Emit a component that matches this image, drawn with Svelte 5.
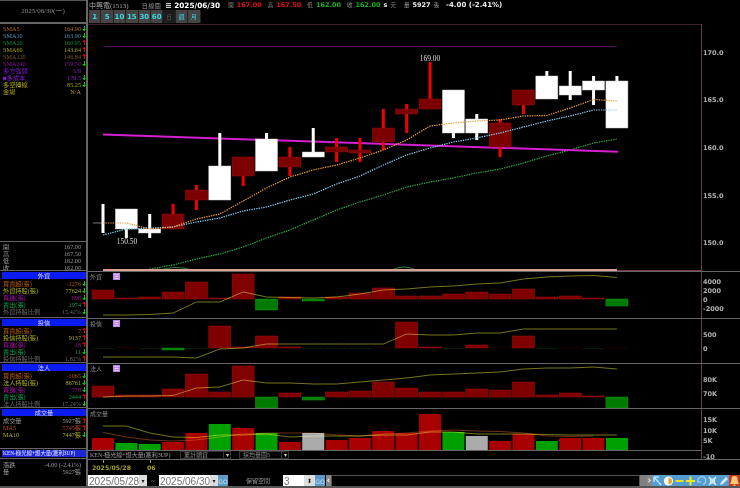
<script>
  // x position of each trading day on the page
  const xs = Array.from({ length: 23 }, (_, i) => 103 + i * 23.36);
  const pts = (ys, from = 0) => ys.map((y, i) => `${xs[i + from]},${y}`).join(' ');

  const indicators = [
    { name: 'SMA5', val: '164.90', dir: 'd', c: '#b86a28' },
    { name: 'SMA10', val: '163.90', dir: 'd', c: '#4f93b5' },
    { name: 'SMA20', val: '160.95', dir: 'u', c: '#0c8a45' },
    { name: 'SMA60', val: '143.64', dir: 'u', c: '#a8a410' },
    { name: 'SMA120', val: '146.84', dir: 'u', c: '#80562a' },
    { name: 'SMA240', val: '159.50', dir: 'd', c: '#8a109a' },
    { name: '多方強弱', val: '5/9', dir: '', c: '#7a18c8' },
    { name: '■多成本', val: '170.5', dir: 'd', c: '#8a20d0' },
    { name: '多空轉線', val: '85.25', dir: 'd', c: '#a8a410' },
    { name: '金場', val: 'N/A', dir: '', c: '#a8a410' },
  ];

  const ohlc = [
    ['開', '167.00'],
    ['高', '167.50'],
    ['低', '162.00'],
    ['收', '162.00'],
  ];

  const boxes = [
    {
      title: '外資',
      h: 47,
      rows: [
        ['買賣超(張)', '-1276', 'd', 'buy'],
        ['外資持股(張)', '77624', 'd', 'hold'],
        ['買進(張)', '698', 'd', 'in'],
        ['賣出(張)', '1974', 'u', 'out'],
        ['外資持股比例', '15.42%', 'd', 'pct'],
      ],
    },
    {
      title: '投信',
      h: 45,
      rows: [
        ['買賣超(張)', '7', 'u', 'buy'],
        ['投信持股(張)', '9137', 'u', 'hold'],
        ['買進(張)', '18', 'u', 'in'],
        ['賣出(張)', '11', 'd', 'out'],
        ['投信持股比例', '1.82%', 'u', 'pct'],
      ],
    },
    {
      title: '法人',
      h: 45,
      rows: [
        ['買賣超(張)', '-1065', 'd', 'buy'],
        ['法人持股(張)', '86761', 'd', 'hold'],
        ['買進(張)', '778', 'd', 'in'],
        ['賣出(張)', '2444', 'u', 'out'],
        ['法人持股比例', '17.24%', 'd', 'pct'],
      ],
    },
    {
      title: '成交量',
      h: 41,
      rows: [
        ['成交量', '5927張', 'u', 'volrow'],
        ['MA5', '5745張', 'u', 'ma5'],
        ['MA10', '7447張', 'd', 'hold'],
      ],
    },
  ];

  const periods = ['1', '5', '10', '15', '30', '60'];

  // candles: top of wick, top of body, bottom of body, bottom of wick (page y)
  const candles = [
    ['w', 204, 204, 233, 233],
    ['w', 209, 209, 229, 238],
    ['w', 214, 229, 233, 238],
    ['r', 204, 214, 229, 229],
    ['r', 185, 190, 200, 210],
    ['w', 133, 166, 200, 200],
    ['r', 157, 157, 176, 186],
    ['w', 133, 139, 171, 171],
    ['r', 147, 157, 167, 176],
    ['w', 128, 152, 157, 157],
    ['r', 138, 147, 152, 162],
    ['r', 138, 150, 153, 162],
    ['r', 109, 128, 142, 150],
    ['r', 104, 109, 114, 133],
    ['r', 62, 99, 109, 109],
    ['w', 90, 90, 133, 138],
    ['w', 114, 119, 133, 140],
    ['r', 119, 123, 147, 157],
    ['r', 90, 90, 105, 114],
    ['w', 71, 76, 99, 99],
    ['w', 71, 86, 95, 100],
    ['w', 76, 81, 90, 105],
    ['w', 76, 81, 128, 128],
  ];

  const sma5 = [223, 223, 229, 227, 219, 214, 201, 188, 177, 170, 165, 158, 150, 140, 126, 123, 121, 120, 116, 115.5, 108, 99.5, 101];
  const sma10 = [235, 229, 228, 227, 222, 218, 211, 207, 200, 194, 184, 176, 165, 155, 148, 142, 138, 133, 127, 121, 116, 110, 110];
  const sma20 = [269, 265, 259, 254, 247, 238, 230, 220, 210, 202, 195, 187, 182, 178, 173, 169, 163, 156, 150, 143, 139];

  const panels = [
    {
      title: '外資', top: 271, h: 47, base: 299,
      bars: [290, 298, 297, 292, 282, 298, 274, 310, 297, 301, 297, 293, 288, 296, 296, 294, 292, 294, 289, 297, 296, 298, 306],
      thin: [],
      lines: [{ c: 'olive', ys: [315, 315, 314.5, 313, 302, 302, 292, 297, 297.5, 298, 297, 294, 290, 289, 287, 286, 284, 283, 279, 277, 276, 275.5, 277.5] }],
      ticks: [['4000', 281], ['2000', 290.5], ['0', 299], ['-2000', 308.5]],
    },
    {
      title: '投信', top: 318, h: 45, base: 348,
      bars: [348.5, 347.5, 348.5, 350, 348.5, 326, 347, 336, 347, 348.5, 348.5, 348.5, 347.6, 322, 347, 348.5, 345, 347.6, 336, 348.5, 347.6, 348.5, 347.6],
      thin: [0, 1, 2, 4, 9, 10, 11, 12, 15, 17, 19, 20, 21, 22],
      lines: [{ c: 'olive', ys: [357, 357, 357, 357, 358, 349, 348, 344, 344, 344, 344, 344, 344, 334, 335, 335, 333, 333, 329, 329, 329, 329, 329] }],
      ticks: [['500', 334], ['0', 348]],
    },
    {
      title: '法人', top: 363, h: 45, base: 397,
      bars: [386, 395, 395, 389, 374, 392, 366, 408, 393, 400, 392, 391, 382, 388, 392, 392, 389, 390, 382, 395, 393, 396, 408],
      thin: [],
      lines: [{ c: 'olive', ys: [397, 396, 396, 395.5, 388, 387, 380, 383, 383, 384, 384, 382, 380, 378, 375, 374, 373, 372, 369, 368, 368, 367, 369] }],
      ticks: [['80K', 379], ['70K', 393]],
    },
  ];

  // volume bars: page y of the top, with the colour of the day
  const volume = [
    [438, 'r'], [443, 'g'], [444, 'g'], [442, 'r'], [433, 'r'], [424, 'g'], [428, 'r'], [433, 'g'],
    [442, 'r'], [433, 'n'], [440, 'r'], [438, 'r'], [431, 'r'], [433, 'r'], [414, 'r'], [432, 'g'],
    [436, 'n'], [441, 'r'], [434, 'r'], [441, 'g'], [438, 'r'], [438, 'r'], [438, 'g'],
  ];
  const volA = [426, 426, 433, 437, 437.5, 435, 435, 434, 437, 436, 436, 436, 435, 435, 432, 432, 434, 434, 434, 434.5, 435, 435, 435];
  const volB = [432.5, 437, 440, 441, 440, 437, 434, 433, 433, 433, 435, 436, 434, 433, 431, 430, 431, 431.5, 433, 436, 436.5, 436];
</script>

<div class="screen">
  <aside class="side">
    <div class="datebox">2025/06/30(一)</div>

    <div class="inds">
      {#each indicators as it}
        <div class="row" style="color:{it.c}">
          <span>{it.name}</span>
          <span class="val">{it.val}<i class={it.dir}></i></span>
        </div>
      {/each}
    </div>

    <div class="ohlc">
      {#each ohlc as [k, v]}
        <div class="row plain"><span>{k}</span><span class="val">{v}<i></i></span></div>
      {/each}
    </div>

    {#each boxes as box}
      <div class="box" style="height:{box.h}px">
        <div class="boxhead">{box.title}</div>
        {#each box.rows as [label, val, dir, kind]}
          <div class="row {kind}">
            <span>{label}</span>
            <span class="val">{val}<i class={dir}></i></span>
          </div>
        {/each}
      </div>
    {/each}

    <div class="strategy"><span>KEN-極光線+爆大量(獲利3UP)</span></div>

    <div class="change">
      <div class="row plain"><span>漲跌</span><span class="val">-4.00 (-2.41%)<i></i></span></div>
      <div class="row plain"><span>量</span><span class="val">5927張<i></i></span></div>
    </div>
  </aside>

  <main class="right">
    <div class="quote">
      <span class="name">中興電(1513)</span>
      <span class="cap kind">日線圖</span>
      <span class="sq"></span>
      <b class="day">2025/06/30</b>
      <span class="cap gapl">開</span><b class="up">167.00</b>
      <span class="cap gapm">高</span><b class="up">167.50</b>
      <span class="cap gapm">低</span><b class="down">162.00</b>
      <span class="cap gapm">收</span><b class="down">162.00</b>
      <b class="wh">s</b><span class="cap">元</span>
      <span class="cap gapq">量</span><b class="wh">5927</b><span class="cap">張</span>
      <b class="wh last">-4.00 (-2.41%)</b>
    </div>

    <div class="periods">
      {#each periods as p}
        <button class="per">{p}</button>
      {/each}
      <button class="per on">日</button>
      <button class="per zh">週</button>
      <button class="per zh">月</button>
    </div>

    <svg class="chart main" viewBox="88 24 652 247" width="652" height="247">
      <line x1="88" y1="24.5" x2="701" y2="24.5" stroke="#3e2230" />
      <line x1="103" y1="46.5" x2="617" y2="46.5" stroke="#560a58" />
      <line x1="93" y1="223" x2="103" y2="223" stroke="#777" />

      <polyline points={pts(sma20, 2)} class="dot" stroke="#2fae44" />
      <line x1="103" y1="134.5" x2="618" y2="151.8" stroke="#d420d0" stroke-width="2" />

      {#each candles as [kind, wt, bt, bb, wb], i}
        <rect x={xs[i] - 1.5} y={wt} width="3" height={wb - wt} fill={kind === 'w' ? '#fff' : '#f00000'} />
        {#if bb > bt && i > 0}
          <rect
            x={xs[i] - 11}
            y={bt}
            width="22"
            height={bb - bt}
            fill={kind === 'w' ? '#fff' : '#7d0000'}
            stroke={kind === 'w' ? '#ccc' : '#9a1010'}
            stroke-width="0.5"
          />
        {/if}
      {/each}

      <polyline points={pts(sma10)} class="dot" stroke="#86cdf0" />
      <polyline points={pts(sma5)} class="dot" stroke="#eda040" />

      <text x="430" y="61" class="mark" text-anchor="middle">169.00</text>
      <text x="127" y="244" class="mark" text-anchor="middle">150.50</text>

      <line x1="701.5" y1="24" x2="701.5" y2="271" stroke="#6a4048" />
      <text x="703" y="54.5" class="tick">170.0</text>
      <text x="703" y="102" class="tick">165.0</text>
      <text x="703" y="149.5" class="tick">160.0</text>
      <text x="703" y="197.5" class="tick">155.0</text>
      <text x="703" y="245" class="tick">150.0</text>

      <path d="M160 270 Q176 265 192 270M392 270Q404 264 416 270" fill="none" stroke="#2a7a3a" />
      <line x1="103" y1="270" x2="617" y2="270" stroke="#d8a090" stroke-width="2" />
      <line x1="617" y1="270.5" x2="701" y2="270.5" stroke="#7a3a55" />
    </svg>

    {#each panels as p}
      <div class="pane" style="height:{p.h}px">
        <svg class="chart" viewBox="88 {p.top + 1} 652 {p.h - 1}" width="652" height={p.h - 1}>
          {#each p.bars as top, i}
            <rect
              x={xs[i] - 11}
              y={Math.min(top, p.base)}
              width="22"
              height={Math.abs(top - p.base)}
              class={top > p.base ? (p.thin.includes(i) ? 'thin-g' : 'bar-g') : p.thin.includes(i) ? 'thin-r' : 'bar-r'}
            />
          {/each}
          {#each p.lines as l}
            <polyline points={pts(l.ys)} class="avg" stroke="#76761c" />
          {/each}
          <line x1="701.5" y1={p.top} x2="701.5" y2={p.top + p.h} stroke="#6a4048" />
          {#each p.ticks as [label, y]}
            <text x="703" {y} dy="2.5" class="tick">{label}</text>
          {/each}
          <text x="90" y={p.top + 8} class="ptitle">{p.title}</text>
          <g transform="translate(113 {p.top + 2})">
            <rect width="7" height="7" fill="#c084f0" />
            <path d="M1.5 1.5h4M1.5 3.5h4M1.5 5.5h4" stroke="#f3e4ff" stroke-width="0.7" />
          </g>
        </svg>
      </div>
    {/each}

    <div class="pane volpane">
      <svg class="chart" viewBox="88 409 652 51" width="652" height="51">
        {#each volume as [top, c], i}
          <rect x={xs[i] - 11} y={top} width="22" height={450 - top} class="v-{c}" />
        {/each}
        <polyline points={pts(volA)} class="avg" stroke="#76761c" />
        <polyline points={pts(volB)} class="avg" stroke="#6e3210" />
        <line x1="88" y1="450.5" x2="701" y2="450.5" stroke="#666" />
        <line x1="701.5" y1="409" x2="701.5" y2="460" stroke="#6a4048" />
        <text x="90" y="416" class="ptitle">成交量</text>
        <text x="703" y="421.5" class="tick">15K</text>
        <text x="703" y="432.5" class="tick">10K</text>
        <text x="703" y="442.5" class="tick">5K</text>
        <text x="703" y="458.5" class="tick">-10</text>
      </svg>
      <div class="ctrl">
        <span class="ctrl-name">KEN-極光線+爆大量(獲利3UP)</span>
        <span class="sel one">累計額資<i>▾</i></span>
        <span class="sel two">採均量圖5<i>▾</i></span>
      </div>
    </div>

    <div class="axis">
      <span class="d1"><em></em>2025/05/28</span>
      <span class="d2"><em></em>06</span>
    </div>

    <div class="tools">
      <span class="inp wide">2025/05/28<i>▾</i></span>
      <span class="tilde">~</span>
      <span class="inp wide">2025/06/30<i>▾</i></span>
      <button class="go">GO</button>
      <span class="keep">保留空間</span>
      <span class="inp num">3<i class="spin">⬍</i></span>
      <button class="go">GO</button>
      <div class="scroll">
        <span class="arr">‹</span>
        <span class="track"></span>
        <span class="thumb"></span>
        <span class="arr rgt">›</span>
      </div>
      <div class="icons">
        <span class="ic"><svg viewBox="0 0 11 12"><path d="M2 2h5M2 2v5M2 2l7 8" stroke="#bfe4ff" stroke-width="1.4" fill="none" /></svg></span>
        <span class="ic"><svg viewBox="0 0 11 12"><circle cx="5.5" cy="6" r="4.6" fill="#fff" /><path d="M5.5 6V2.5a3.5 3.5 0 0 1 0 7z" fill="#f0a030" /></svg></span>
        <span class="ic"><svg viewBox="0 0 11 12"><rect x="1.5" y="5" width="8" height="2" fill="#e8e020" /></svg></span>
        <span class="ic"><svg viewBox="0 0 11 12"><path d="M5.5 1.5v9M1 6h9" stroke="#f0e820" stroke-width="2" /></svg></span>
        <span class="ic"><svg viewBox="0 0 11 12"><path d="M2 7a4 4 0 1 1 5 2.5M2 3.5V7h3.4" stroke="#a8d8f8" stroke-width="1.1" fill="none" /></svg></span>
        <span class="ic"><svg viewBox="0 0 11 12"><path d="M2 2l7 8M9 2l-7 8" stroke="#d8f0ff" stroke-width="1.2" /><rect x="3.4" y="4" width="4.2" height="4" fill="none" stroke="#d8f0ff" /></svg></span>
        <span class="ic"><svg viewBox="0 0 11 12"><path d="M2 10l1-3 5-5 2 2-5 5z" fill="#cfe9fb" /></svg></span>
        <span class="ic bell"><svg viewBox="0 0 11 12"><path d="M5.5 1a3 3 0 0 1 3 3c0 3 1.5 4.5 1.5 5H1c0-.5 1.5-2 1.5-5a3 3 0 0 1 3-3z" fill="#f8c878" /><circle cx="5.5" cy="10.2" r="1" fill="#f8c878" /></svg></span>
      </div>
    </div>
  </main>
</div>

<style>
  :global(body) {
    margin: 0;
    background: #000;
  }

  .screen {
    display: flex;
    width: 740px;
    height: 488px;
    overflow: hidden;
    background: #000;
    font-family: "Liberation Serif", "Noto Sans CJK TC", serif;
    border-bottom: 2px solid #555;
    box-sizing: border-box;
  }

  .side {
    width: 88px;
    flex: none;
    display: flex;
    flex-direction: column;
    border-right: 2px solid #666;
    box-sizing: border-box;
    font-size: 6.2px;
    line-height: 7px;
  }

  .datebox {
    height: 24px;
    flex: none;
    display: flex;
    align-items: center;
    justify-content: center;
    border-top: 1px solid #555;
    border-bottom: 2px solid #666;
    box-sizing: border-box;
    color: #8a8a8a;
    font-size: 7px;
  }

  .inds {
    padding-top: 1px;
    flex: 1;
  }

  .row {
    display: flex;
    justify-content: space-between;
    height: 7px;
    padding: 0 0 0 3px;
    white-space: nowrap;
  }

  .val {
    display: flex;
    align-items: center;
  }

  .val i {
    display: inline-block;
    width: 4px;
    height: 5px;
    margin: 0 0 0 1px;
    position: relative;
  }

  .val i.d {
    background: linear-gradient(#0c0, #0c0) center / 1px 100% no-repeat;
  }

  .val i.u {
    background: linear-gradient(#d00, #d00) center / 1px 100% no-repeat;
  }

  .val i.d::after,
  .val i.u::after {
    content: "";
    position: absolute;
    left: 0;
    border-left: 2px solid transparent;
    border-right: 2px solid transparent;
  }

  .val i.d::after {
    bottom: 0;
    border-top: 2px solid #0c0;
  }

  .val i.u::after {
    top: 0;
    border-bottom: 2px solid #d00;
  }

  .plain {
    color: #9a9a9a;
  }

  .ohlc {
    flex: none;
    height: 29px;
    padding-top: 1px;
    border-top: 1px solid #666;
    box-sizing: border-box;
  }

  .box {
    flex: none;
    border-top: 1px solid #666;
    padding-top: 1px;
    box-sizing: border-box;
  }

  .boxhead {
    height: 7px;
    margin: 0 0 1px 2px;
    background: #0a1cf0;
    color: #ddd;
    text-align: center;
  }

  .buy {
    color: #b85a10;
  }

  .hold {
    color: #b0b020;
  }

  .in {
    color: #a010a0;
  }

  .out {
    color: #10a050;
  }

  .pct {
    color: #6a6a6a;
  }

  .volrow {
    color: #999;
  }

  .ma5 {
    color: #b84a20;
  }

  .strategy {
    flex: none;
    height: 11px;
    display: flex;
    align-items: center;
    border-top: 1px solid #666;
    border-bottom: 1px solid #666;
    box-sizing: border-box;
  }

  .strategy span {
    flex: 1;
    margin-left: 2px;
    padding-left: 1px;
    background: #1a28d8;
    color: #e8e8ff;
    white-space: nowrap;
    font-size: 5.4px;
  }

  .change {
    flex: none;
    padding-top: 2px;
    height: 27px;
    box-sizing: border-box;
  }

  .right {
    flex: 1;
    min-width: 0;
    display: flex;
    flex-direction: column;
  }

  .quote {
    height: 10px;
    flex: none;
    display: flex;
    align-items: center;
    padding-left: 1px;
    gap: 3px;
    color: #aaa;
    font-size: 7px;
    white-space: nowrap;
  }

  .quote b {
    font-family: "DejaVu Sans", sans-serif;
    font-size: 6.5px;
  }

  .quote .day {
    font-size: 7.3px;
    color: #fff;
  }

  .quote .last {
    margin-left: 4px;
    font-size: 7px;
  }

  .cap {
    font-size: 5.5px;
    color: #999;
  }

  .kind {
    margin-left: 10px;
    font-size: 6px;
    letter-spacing: 0.5px;
  }

  .sq {
    width: 5px;
    height: 5px;
    margin-left: 2px;
    background: repeating-linear-gradient(#ccc 0 1px, #333 1px 2px);
  }

  .gapl {
    margin-left: 5px;
  }

  .gapm {
    margin-left: 3px;
  }

  .gapq {
    margin-left: 5px;
  }

  .up {
    color: #e01010;
  }

  .down {
    color: #10b020;
  }

  .wh {
    color: #e8e8e8;
  }

  .periods {
    height: 14px;
    flex: none;
    display: flex;
    padding: 0 0 1px 1px;
    box-sizing: border-box;
  }

  .per {
    width: 12.4px;
    padding: 0;
    border: 0;
    border-right: 1px solid #222;
    background: #444;
    color: #38d8e0;
    font: bold 7px "DejaVu Sans", sans-serif;
  }

  .per.on {
    background: #1c1c1c;
    color: #555;
    font: 6px "Liberation Serif", "Noto Sans CJK TC", serif;
  }

  .per.zh {
    font: 6px "Liberation Serif", "Noto Sans CJK TC", serif;
  }

  .chart {
    display: block;
  }

  .dot {
    fill: none;
    stroke-width: 1.2;
    stroke-dasharray: 1.4 1;
  }

  .avg {
    fill: none;
    stroke-width: 1;
    mix-blend-mode: screen;
  }

  .mark {
    fill: #ddd;
    font: 7.5px "Liberation Serif", serif;
  }

  .tick {
    fill: #b0b0b0;
    font: bold 6.5px "DejaVu Sans", sans-serif;
  }

  .ptitle {
    fill: #888;
    font: 6px "Liberation Serif", "Noto Sans CJK TC", serif;
  }

  .pane {
    flex: none;
    border-top: 1px solid #666;
    box-sizing: border-box;
    overflow: hidden;
  }

  .bar-r {
    fill: #800000;
    stroke: #a01010;
    stroke-width: 0.5;
  }

  .bar-g {
    fill: #007a00;
    stroke: #10a010;
    stroke-width: 0.5;
  }

  .thin-r {
    fill: #4a0000;
  }

  .thin-g {
    fill: #003c00;
  }

  .v-r {
    fill: #a80000;
  }

  .v-g {
    fill: #00a000;
  }

  .v-n {
    fill: #aaa;
  }

  .volpane {
    height: 52px;
    position: relative;
    border-bottom: 1px solid #666;
  }

  .ctrl {
    position: absolute;
    left: 0;
    bottom: 0;
    height: 9px;
    width: 613px;
    display: flex;
    align-items: center;
    color: #9a9a9a;
    font-size: 6px;
  }

  .ctrl-name {
    width: 90px;
    margin-left: 2px;
    white-space: nowrap;
  }

  .sel {
    display: flex;
    justify-content: space-between;
    align-items: center;
    height: 8px;
    border: 1px solid #333;
    box-sizing: border-box;
    padding-left: 3px;
    color: #888;
    font-size: 6px;
  }

  .sel i {
    font-style: normal;
    width: 6px;
    text-align: center;
    color: #ccc;
    border-left: 1px solid #333;
  }

  .one {
    width: 51px;
  }

  .two {
    width: 50px;
    margin-left: 8px;
  }

  .axis {
    flex: none;
    height: 15px;
    display: flex;
    color: #a0a020;
    font: bold 6.2px "DejaVu Sans", sans-serif;
  }

  .axis span {
    position: relative;
    padding-top: 4px;
  }

  .axis em {
    position: absolute;
    top: 0;
    width: 1px;
    height: 3px;
    background: #a0a020;
  }

  .d1 {
    margin-left: 4px;
  }

  .d1 em {
    left: 11px;
  }

  .d2 {
    margin-left: 16px;
  }

  .d2 em {
    left: 3px;
  }

  .tools {
    flex: 1;
    min-height: 0;
    display: flex;
    align-items: stretch;
    font-size: 7px;
    color: #999;
  }

  .inp {
    display: flex;
    align-items: center;
    justify-content: space-between;
    box-sizing: border-box;
    height: 12px;
    padding-left: 1px;
    background: #fff;
    color: #777;
    font: 10px "Liberation Sans", sans-serif;
  }

  .inp i {
    width: 8px;
    height: 12px;
    background: #ddd;
    color: #222;
    font: 6px/12px "DejaVu Sans", sans-serif;
    text-align: center;
  }

  .wide {
    width: 59px;
  }

  .num {
    width: 32px;
    margin-left: 11px;
  }

  .inp i.spin {
    width: 11px;
  }

  .tilde {
    width: 12px;
    text-align: center;
    line-height: 12px;
    color: #aaa;
  }

  .go {
    width: 10px;
    height: 12px;
    padding: 0;
    border: 0;
    background: #5a9cc8;
    color: #bfe0f0;
    font: 6px "DejaVu Sans", sans-serif;
  }

  .keep {
    margin-left: 18px;
    width: 26px;
    line-height: 13px;
    white-space: nowrap;
    font-size: 6px;
  }

  .scroll {
    width: 326px;
    height: 12px;
    display: flex;
    align-items: center;
    margin-left: 1px;
  }

  .arr {
    width: 5px;
    height: 12px;
    background: #888;
    color: #fff;
    text-align: center;
    font: bold 8px/11px "DejaVu Sans", sans-serif;
  }

  .track {
    flex: 1;
    height: 10px;
    border: 1px solid #555;
    background: #000;
  }

  .thumb {
    width: 7px;
    height: 12px;
    background: #808080;
  }

  .icons {
    display: flex;
    height: 12px;
  }

  .ic {
    width: 11px;
    height: 12px;
    background: #559cd0;
  }

  .ic.bell {
    background: #c83a1c;
  }

  .ic svg {
    display: block;
    width: 11px;
    height: 12px;
  }
</style>
